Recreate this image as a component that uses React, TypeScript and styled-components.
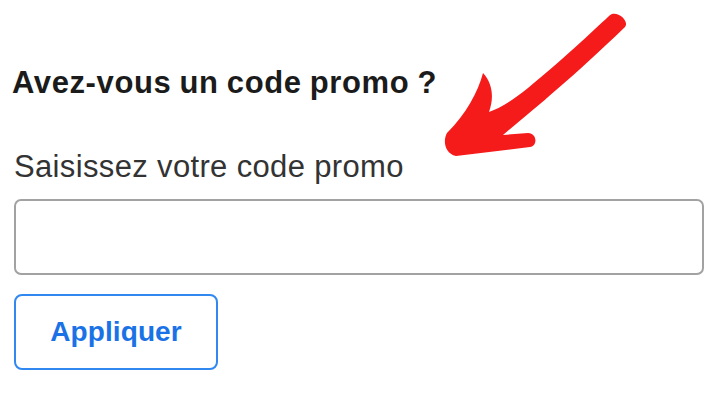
import React from "react";
import styled, { createGlobalStyle } from "styled-components";

const GlobalStyle = createGlobalStyle`
  html, body {
    margin: 0;
    padding: 0;
    background: #ffffff;
  }
  body {
    font-family: "Liberation Sans", Arial, sans-serif;
  }
`;

const Page = styled.div`
  position: relative;
  width: 718px;
  height: 400px;
  box-sizing: border-box;
  padding: 65px 14px 0 14px;
  display: flex;
  flex-direction: column;
  overflow: hidden;
`;

const Heading = styled.h2`
  margin: 0 0 48px -2px;
  font-size: 31px;
  line-height: 36px;
  font-weight: 700;
  letter-spacing: 0.6px;
  word-spacing: -1px;
  color: #1b1b1b;
`;

const Label = styled.label`
  display: block;
  margin: 0 0 14px 0;
  font-size: 31px;
  line-height: 36px;
  font-weight: 400;
  letter-spacing: 0.35px;
  color: #333333;
`;

const Input = styled.input`
  display: block;
  box-sizing: border-box;
  width: 690px;
  height: 76px;
  margin: 0 0 19px 0;
  border: 2px solid #a2a2a2;
  border-radius: 7px;
  background: #ffffff;
  font-family: "Liberation Sans", Arial, sans-serif;
  font-size: 26px;
  padding: 0 16px;
  outline: none;
`;

const ApplyButton = styled.button`
  box-sizing: border-box;
  width: 204px;
  height: 76px;
  border: 2px solid #3188f1;
  border-radius: 8px;
  background: #ffffff;
  color: #1a72e6;
  font-family: "Liberation Sans", Arial, sans-serif;
  font-size: 28px;
  font-weight: 700;
  letter-spacing: 0.1px;
  padding: 0;
  cursor: pointer;
`;

const ArrowOverlay = styled.svg`
  position: absolute;
  left: 0;
  top: 0;
  width: 718px;
  height: 400px;
  pointer-events: none;
`;

export default function App() {
  return (
    <>
      <GlobalStyle />
      <Page>
        <Heading>Avez-vous un code promo ?</Heading>
        <Label htmlFor="promo">Saisissez votre code promo</Label>
        <Input id="promo" type="text" />
        <div>
          <ApplyButton type="button">Appliquer</ApplyButton>
        </div>
        <ArrowOverlay viewBox="0 0 718 400">
          <path
            fill="#f61b1b"
            d="M609,16 C592,32 560,62 528,88 C512,101 500,108 489,112 C494,98 493,84 483,73 C478,92 466,114 447,133 C443,140 444,153 456,156 L530,147 C538,146 537,133 528,133 L503,135 C535,108 570,80 625,27 C630,21 616,9 609,16 Z"
          />
        </ArrowOverlay>
      </Page>
    </>
  );
}
